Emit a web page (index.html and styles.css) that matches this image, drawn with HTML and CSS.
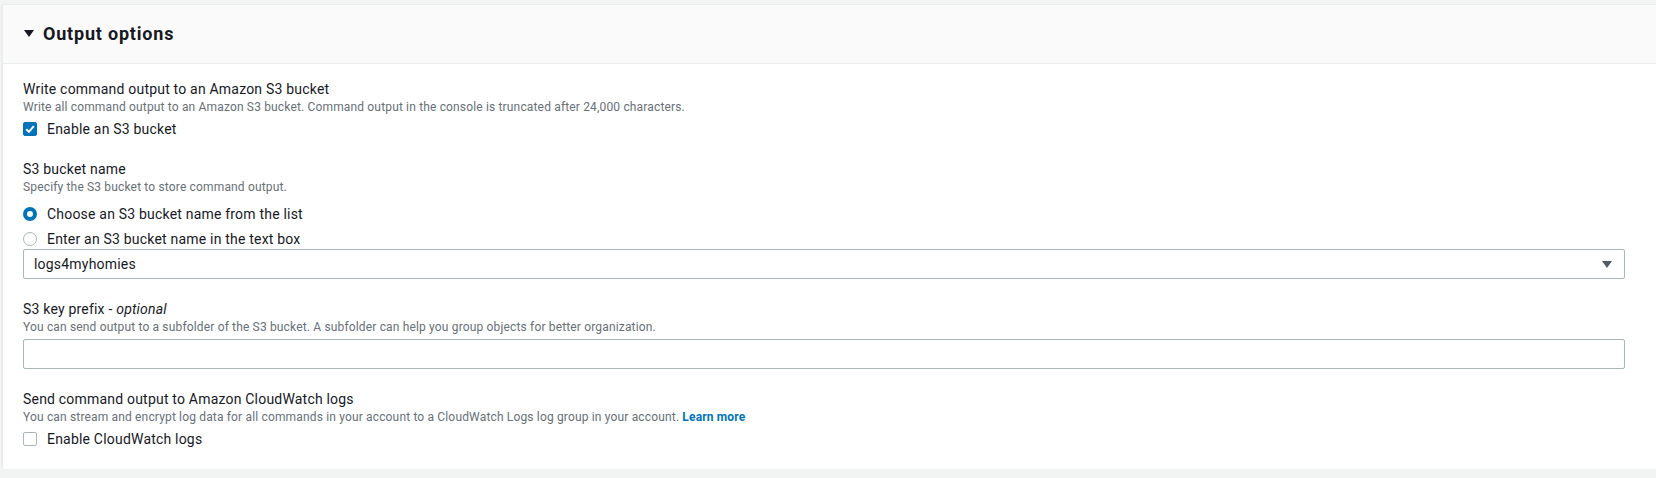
FILE: index.html
```html
<!DOCTYPE html>
<html lang="en">
<head>
<meta charset="utf-8">
<title>Output options</title>
<link rel="stylesheet" href="styles.css">
</head>
<body>
<div class="panel">
  <div class="panel-header">
    <svg class="caret" width="10" height="8" viewBox="0 0 10 8"><polygon points="0,0 10,0 5,7" fill="#16191f"/></svg>
    <h2 class="panel-title">Output options</h2>
  </div>
  <div class="panel-body">
    <div class="field">
      <div class="label">Write command output to an Amazon S3 bucket</div>
      <div class="desc">Write all command output to an Amazon S3 bucket. Command output in the console is truncated after 24,000 characters.</div>
      <div class="option">
        <span class="checkbox checked"><svg width="14" height="14" viewBox="0 0 14 14"><polyline points="3.2,7.2 5.9,9.8 10.8,4.2" fill="none" stroke="#fff" stroke-width="2"/></svg></span>
        <span class="option-text">Enable an S3 bucket</span>
      </div>
    </div>
    <div class="field">
      <div class="label">S3 bucket name</div>
      <div class="desc">Specify the S3 bucket to store command output.</div>
      <div class="option radio-row first">
        <span class="radio selected"></span>
        <span class="option-text">Choose an S3 bucket name from the list</span>
      </div>
      <div class="option radio-row">
        <span class="radio"></span>
        <span class="option-text">Enter an S3 bucket name in the text box</span>
      </div>
      <div class="select">
        <span class="select-value">logs4myhomies</span>
        <svg class="select-arrow" width="10" height="7" viewBox="0 0 10 7"><polygon points="0,0 10,0 5,7" fill="#545b64"/></svg>
      </div>
    </div>
    <div class="field">
      <div class="label">S3 key prefix - <i>optional</i></div>
      <div class="desc">You can send output to a subfolder of the S3 bucket. A subfolder can help you group objects for better organization.</div>
      <div class="input"></div>
    </div>
    <div class="field">
      <div class="label">Send command output to Amazon CloudWatch logs</div>
      <div class="desc">You can stream and encrypt log data for all commands in your account to a CloudWatch Logs log group in your account. <a class="link" href="#">Learn more</a></div>
      <div class="option">
        <span class="checkbox"></span>
        <span class="option-text">Enable CloudWatch logs</span>
      </div>
    </div>
  </div>
</div>
</body>
</html>
```

FILE: styles.css
```css
html, body {
  margin: 0;
  padding: 0;
  overflow: hidden;
}
body {
  background: #f2f3f3;
  font-family: Roboto, "Liberation Sans", Arial, sans-serif;
  color: #16191f;
  padding: 4px 0 0 2px;
  letter-spacing: 0.2px;
}
.panel {
  margin-right: -11px;
  background: #fff;
  border: 1px solid #eaeded;
  border-bottom: none;
  box-shadow: 0 1px 0 0 #aab7b8, 0 2px 1px 0 rgba(0, 28, 36, 0.12);
}
.panel-header {
  height: 58px;
  background: #fafafa;
  border-bottom: 1px solid #eaeded;
  display: flex;
  align-items: center;
  padding-left: 21px;
}
.caret {
  display: block;
  margin-right: 9px;
}
.panel-title {
  margin: 0;
  font-size: 18px;
  font-weight: 700;
  line-height: 22px;
  letter-spacing: 0.8px;
}
.panel-body {
  padding: 15px 41px 20px 20px;
}
.field + .field {
  margin-top: 20px;
}
.label {
  font-size: 14px;
  line-height: 20px;
}
.desc {
  font-size: 12px;
  line-height: 16px;
  color: #687078;
  letter-spacing: 0.16px;
}
.link {
  color: #0073bb;
  font-weight: 700;
  text-decoration: none;
}
.option {
  display: flex;
  align-items: center;
  height: 20px;
  margin-top: 4px;
  font-size: 14px;
}
.radio-row.first {
  margin-top: 9px;
}
.radio-row {
  margin-top: 5px;
}
.option-text {
  margin-left: 10px;
}
.checkbox {
  width: 14px;
  height: 14px;
  box-sizing: border-box;
  border: 1px solid #aab7b8;
  border-radius: 2px;
  display: block;
  position: relative;
}
.checkbox.checked {
  background: #0073bb;
  border-color: #0073bb;
}
.checkbox svg {
  position: absolute;
  left: -1px;
  top: -1px;
}
.radio {
  width: 14px;
  height: 14px;
  box-sizing: border-box;
  border-radius: 50%;
  border: 1px solid #aab7b8;
  display: block;
}
.radio.selected {
  border: 4px solid #0073bb;
  background: #fff;
}
.select {
  height: 30px;
  box-sizing: border-box;
  border: 1px solid #aab7b8;
  border-radius: 2px;
  display: flex;
  align-items: center;
  justify-content: space-between;
  padding: 0 12px 0 10px;
  font-size: 14px;
}
.select-arrow {
  display: block;
}
.input {
  margin-top: 4px;
  height: 30px;
  box-sizing: border-box;
  border: 1px solid #aab7b8;
  border-radius: 2px;
}
```
